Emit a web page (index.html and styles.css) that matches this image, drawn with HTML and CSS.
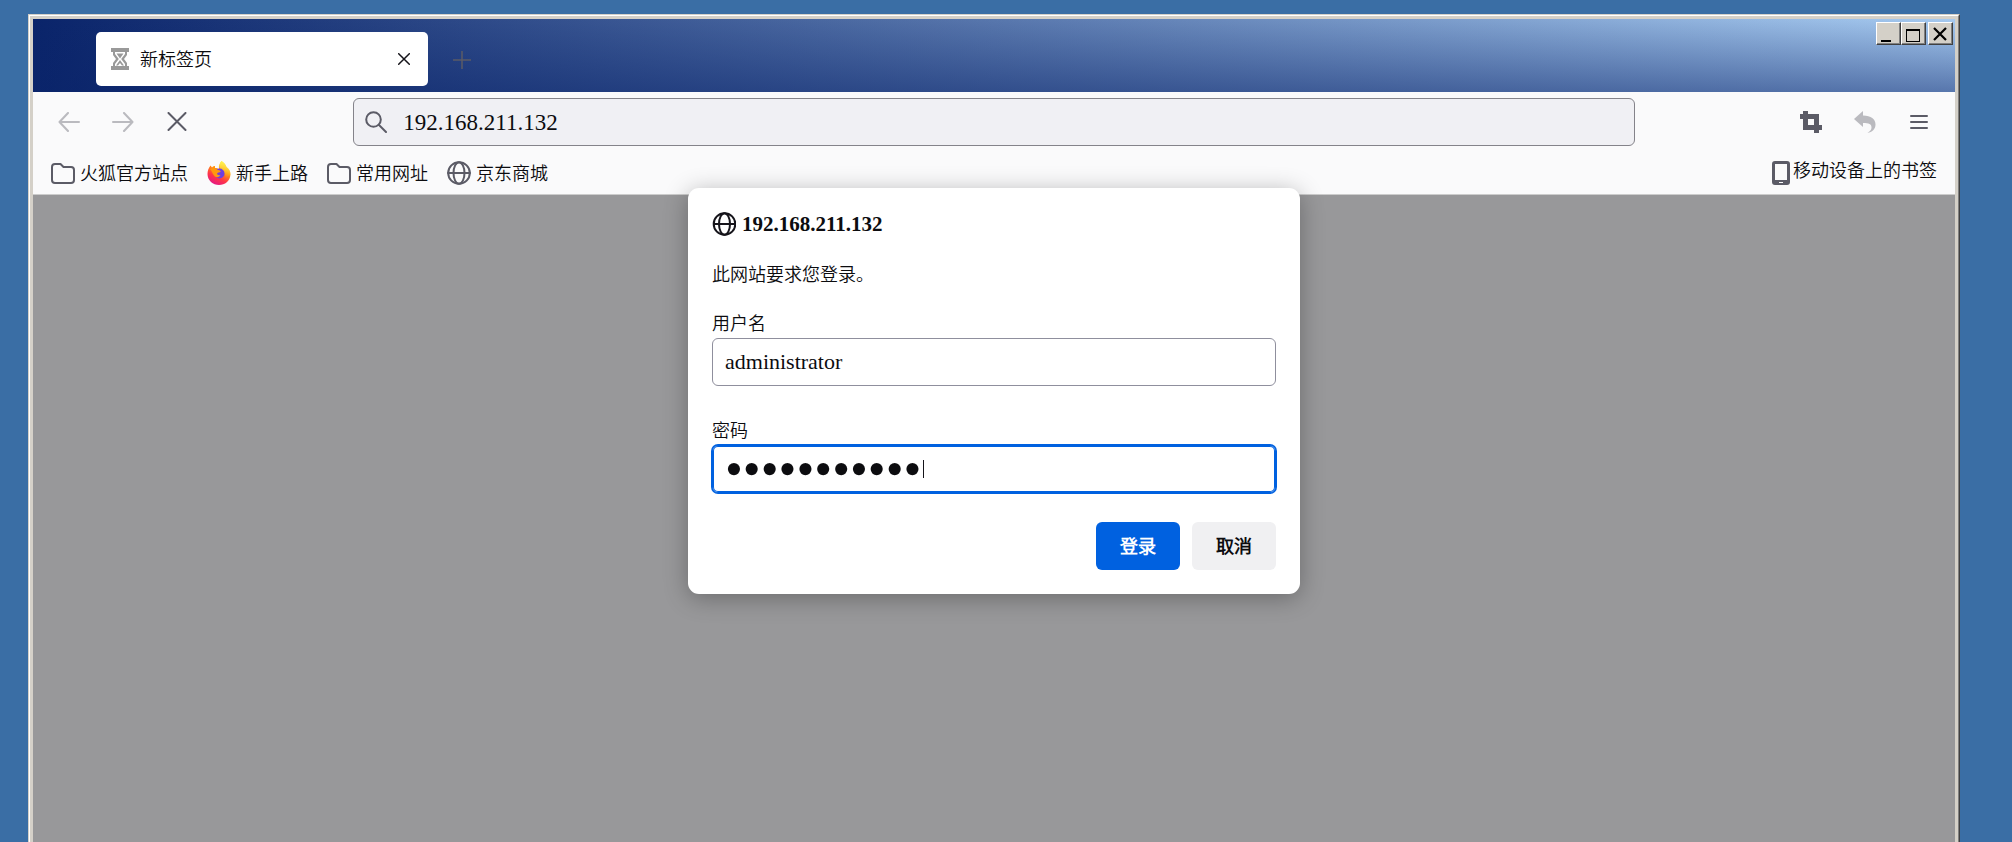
FILE: index.html
```html
<!DOCTYPE html>
<html lang="zh-CN">
<head>
<meta charset="utf-8">
<title>新标签页</title>
<link rel="stylesheet" href="styles.css">
</head>
<body>
<div class="window">
  <div class="frame">
    <header class="titlebar">
      <div class="tab">
        <svg class="tab-icon" width="18" height="22" viewBox="0 0 18 22">
          <path fill="#999" d="M0 0h18v4h-2v3l-3 4 3 4v3h2v4H0v-4h2v-3l3-4-3-4V4H0z"/>
          <path fill="#fff" d="M4 4h10v2l-3.800 5 3.800 5v2H4v-2l3.800-5L4 6z"/>
          <path fill="#999" d="M5.500 5.500h7L9 10.500zM9 12l4 5.500h-2L9 15l-2 2.500H5z"/>
        </svg>
        <span class="tab-title">新标签页</span>
        <button class="icon-button tab-close" aria-label="关闭标签页"><svg width="12" height="12" viewBox="0 0 12 12"><path d="M.7.7l10.600 10.600M11.300.7L.7 11.300"/></svg></button>
      </div>
      <button class="icon-button new-tab" aria-label="打开新标签页"><svg width="18" height="18" viewBox="0 0 18 18"><path d="M9 0v18M0 9h18"/></svg></button>
      <div class="window-controls">
        <button class="control" aria-label="最小化"><svg width="22" height="19" viewBox="0 0 22 19"><path d="M4 16h10v2H4z"/></svg></button>
        <button class="control" aria-label="最大化"><svg width="22" height="19" viewBox="0 0 22 19"><path fill-rule="evenodd" d="M4 5h14v13H4zM5 7v10h12V7z"/></svg></button>
        <button class="control close" aria-label="关闭"><svg width="22" height="19" viewBox="0 0 22 19"><path d="M5 4l12 12M17 4L5 16" stroke="#000" stroke-width="2.200" fill="none"/></svg></button>
      </div>
    </header>
    <nav class="toolbar">
      <div class="nav-buttons">
        <button class="icon-button dim" aria-label="后退"><svg width="22" height="20" viewBox="0 0 22 20"><path d="M10 1L1.500 10l8.500 9M2 10h19" /></svg></button>
        <button class="icon-button dim" aria-label="前进"><svg width="22" height="20" viewBox="0 0 22 20"><path d="M12 1l8.500 9-8.500 9M20 10H1"/></svg></button>
        <button class="icon-button" aria-label="停止"><svg width="22" height="20" viewBox="0 0 22 20"><path d="M2.500 1l17 17M19.500 1l-17 17"/></svg></button>
      </div>
      <div class="address">
        <svg class="line" width="22" height="22" viewBox="0 0 22 22"><circle cx="8.500" cy="8.500" r="7.300"/><path d="M14 14l7 7"/></svg>
        <input class="address-input" type="text" value="192.168.211.132" aria-label="地址">
      </div>
      <div class="tool-buttons">
        <button class="icon-button" aria-label="截图"><svg width="22" height="22" viewBox="0 0 22 22"><path class="solid" fill-rule="evenodd" d="M3 0h5v3h11v11h3v5h-3v3h-5v-3H3V8H0V3h3zM8 8v6h6V8z"/></svg></button>
        <button class="icon-button dim" aria-label="撤销"><svg width="22" height="22" viewBox="0 0 22 22"><path class="solid" d="M0 8L9 0v4.500c8 0 12.500 3.500 12.500 9 0 5-3.500 7.500-8 8.500 3-2 4-3.500 4-5.500 0-3.500-2.500-4.500-8.500-4.500V16z"/></svg></button>
        <button class="icon-button" aria-label="菜单"><svg width="22" height="16" viewBox="0 0 22 16"><path d="M3 2h16M3 8h16M3 14h16"/></svg></button>
      </div>
    </nav>
    <nav class="bookmarks">
      <a class="bookmark" href="#"><svg class="line" width="24" height="22" viewBox="0 0 24 22"><path d="M4 2h5.500l3 3H20a3 3 0 0 1 3 3v10a3 3 0 0 1-3 3H4a3 3 0 0 1-3-3V5a3 3 0 0 1 3-3z"/></svg><span>火狐官方站点</span></a>
      <a class="bookmark" href="#"><svg width="24" height="24" viewBox="0 0 24 24">
        <defs>
          <linearGradient id="flame" x1=".8" y1="0" x2=".3" y2="1"><stop offset=".05" stop-color="#fff44f"/><stop offset=".4" stop-color="#ff980e"/><stop offset=".7" stop-color="#ff3647"/><stop offset="1" stop-color="#e31587"/></linearGradient>
          <linearGradient id="tail" x1=".5" y1="0" x2=".5" y2="1"><stop offset="0" stop-color="#fff44f"/><stop offset="1" stop-color="#ffbd2f" stop-opacity="0"/></linearGradient>
        </defs>
        <path fill="url(#flame)" d="M14.500 0c3 2 4.500 4.300 5 6 3 2 4 5 4 7.500C23 20 18 24 12 24S.5 19.500.5 13c0-3 1-6 3-8.500L5 6.500C6 5 7 5 8 5v2c1.500 0 3 .5 4 1-.5-3 .5-6 2.500-8z"/>
        <path fill="url(#tail)" d="M14.500 0c3 2 4.500 4.300 5 6 3 2 4 5 4 7.500l-5 4C19 11 15 10 13 8c-1-3-.5-6 1.500-8z"/>
        <circle cx="12.500" cy="12.500" r="5" fill="#6e3fe0"/>
        <path fill="#ff980e" d="M3 8c3-2 6-1 8 1 2 0 3 1 2.500 2-1.500.5-3 .5-3.500 1.500 0 1.500 2 2 3.500 1.500-1 2.500-5 3-6.500.5C5 12 5 10 3 8z"/>
      </svg><span>新手上路</span></a>
      <a class="bookmark" href="#"><svg class="line" width="24" height="22" viewBox="0 0 24 22"><path d="M4 2h5.500l3 3H20a3 3 0 0 1 3 3v10a3 3 0 0 1-3 3H4a3 3 0 0 1-3-3V5a3 3 0 0 1 3-3z"/></svg><span>常用网址</span></a>
      <a class="bookmark" href="#"><svg class="line" width="24" height="24" viewBox="0 0 24 24"><circle cx="12" cy="12" r="10.800"/><ellipse cx="12" cy="12" rx="5.500" ry="10.800"/><path d="M1 12h22"/></svg><span>京东商城</span></a>
      <a class="bookmark mobile" href="#"><svg width="18" height="24" viewBox="0 0 18 24"><path fill="#5b5b66" fill-rule="evenodd" d="M3 0h12a3 3 0 0 1 3 3v18a3 3 0 0 1-3 3H3a3 3 0 0 1-3-3V3a3 3 0 0 1 3-3zM3 3v16h12V3zM7 21v1h4v-1z"/></svg><span>移动设备上的书签</span></a>
    </nav>
    <main class="page">
      <form class="dialog" role="dialog" aria-labelledby="host">
        <h1 class="host" id="host"><svg class="line" width="24" height="24" viewBox="0 0 24 24"><circle cx="12.500" cy="12" r="10.800"/><ellipse cx="12.500" cy="12" rx="5.500" ry="10.800"/><path d="M2 12h21"/></svg>192.168.211.132</h1>
        <p class="message">此网站要求您登录。</p>
        <label class="label" for="user">用户名</label>
        <input class="field" id="user" type="text" value="administrator">
        <label class="label" for="pass">密码</label>
        <div class="secret">
          <input class="field focused" id="pass" type="password" value="abcdefghijk">
          <span class="caret"></span>
        </div>
        <div class="actions">
          <button class="button primary" type="button">登录</button>
          <button class="button" type="button">取消</button>
        </div>
      </form>
    </main>
  </div>
</div>
</body>
</html>
```
FILE: styles.css
```css
* {
  box-sizing: border-box;
}

body {
  margin: 0;
  height: 100vh;
  overflow: hidden;
  display: flex;
  padding: 14px 52px 0 28px;
  background: #3a6ea5;
  color: #0c0c0f;
  font: 350 18px/24px "Noto Sans CJK SC DemiLight", "Noto Sans CJK SC", sans-serif;
}

svg {
  display: block;
  flex: none;
}

button,
input {
  font: inherit;
  color: inherit;
}

.window {
  flex: 1;
  display: flex;
  border: 1px solid;
  border-color: #d4d0c8 #404040 #404040 #d4d0c8;
  border-bottom: 0;
}

.frame {
  flex: 1;
  min-width: 0;
  display: flex;
  flex-direction: column;
  border: 1px solid;
  border-color: #fff #808080 #808080 #fff;
  border-bottom: 0;
  padding: 3px 3px 0;
  background: #d4d0c8;
}

.titlebar {
  display: flex;
  align-items: flex-start;
  height: 73px;
  padding: 13px 2px 0 63px;
  background:
    linear-gradient(to bottom, rgba(10, 36, 106, 0), rgba(10, 36, 106, 0.5)),
    linear-gradient(to right, #0a246a, #a6caf0);
}

.tab {
  display: flex;
  align-items: center;
  gap: 11px;
  width: 332px;
  height: 54px;
  padding: 0 18px 0 15px;
  border-radius: 5px;
  background: #fff;
}

.tab-title {
  flex: 1;
  padding-bottom: 2px;
}

.icon-button {
  display: flex;
  align-items: center;
  justify-content: center;
  padding: 0;
  border: 0;
  background: none;
}

.icon-button path,
.line {
  fill: none;
  stroke: #5b5b66;
  stroke-width: 2;
  stroke-linecap: round;
  stroke-linejoin: round;
}

.icon-button .solid {
  fill: #5b5b66;
  stroke: none;
}

.tab-close path {
  stroke: #15141a;
  stroke-width: 1.5;
}

.new-tab path {
  stroke-width: 1.5;
}

.dim {
  opacity: 0.4;
}

.new-tab {
  height: 56px;
  margin-left: 25px;
}

.window-controls {
  display: flex;
  margin: -10px 0 0 auto;
}

.control {
  width: 25px;
  height: 23px;
  padding: 0;
  border: 1px solid;
  border-color: #fff #404040 #404040 #fff;
  box-shadow: inset -1px -1px #808080;
  background: #d4d0c8;
}

.control.close {
  margin-left: 2px;
}

.toolbar {
  display: grid;
  grid-template-columns: 1fr 4fr 1fr;
  align-items: center;
  height: 60px;
  background: #fafafb;
}

.nav-buttons,
.tool-buttons {
  display: flex;
  gap: 32px;
}

.nav-buttons {
  padding-left: 25px;
}

.tool-buttons {
  justify-content: flex-end;
  padding-right: 25px;
}

.address {
  display: flex;
  align-items: center;
  gap: 16px;
  height: 48px;
  padding: 0 11px;
  border: 1px solid #84838a;
  border-radius: 6px;
  background: #f0f0f4;
}

.address-input {
  flex: 1;
  min-width: 0;
  padding: 2px 0 0;
  border: 0;
  outline: 0;
  background: none;
  font: 23px/28px "Liberation Serif", serif;
}

.bookmarks {
  display: flex;
  align-items: center;
  gap: 19px;
  height: 43px;
  padding: 0 18px 1px;
  border-bottom: 1px solid #ccc;
  background: #fafafb;
}

.bookmark {
  display: flex;
  align-items: center;
  gap: 5px;
  color: inherit;
  text-decoration: none;
}

.bookmark span {
  padding-bottom: 2px;
}

.mobile {
  gap: 3px;
  margin-left: auto;
}

.bookmark.mobile span {
  padding-bottom: 8px;
}

.page {
  flex: 1;
  display: flex;
  align-items: flex-start;
  justify-content: center;
  background: #98989a;
}

.dialog {
  display: flex;
  flex-direction: column;
  width: 612px;
  margin-top: -7px;
  padding: 24px;
  border-radius: 11px;
  background: #fff;
  box-shadow: 0 4px 24px rgba(0, 0, 0, 0.3);
}

.host {
  display: flex;
  align-items: center;
  gap: 6px;
  margin: 0;
  font: bold 21px/24px "Liberation Serif", serif;
}

.host .line {
  stroke: #15141a;
}

.message {
  margin: 25px 0;
}

.label {
  margin-bottom: 4px;
}

.field {
  width: 100%;
  height: 48px;
  padding: 0 12px;
  border: 1px solid #8f8f9d;
  border-radius: 6px;
  outline: 0;
  background: #fff;
  font: 22px/28px "Liberation Serif", serif;
}

.secret {
  position: relative;
}

#user {
  margin-bottom: 31px;
}

.focused {
  border-color: #0061e0;
  box-shadow: inset 0 0 0 1px #0061e0, 0 0 0 1px #0061e0;
  font-size: 51px;
}

.caret {
  position: absolute;
  left: 211px;
  top: 15px;
  width: 1px;
  height: 18px;
  background: #15141a;
}

.actions {
  display: flex;
  justify-content: flex-end;
  gap: 12px;
  margin-top: 29px;
}

.button {
  width: 84px;
  height: 48px;
  padding: 0 0 2px;
  border: 0;
  border-radius: 6px;
  background: #f0f0f2;
  font-weight: 700;
}

.primary {
  background: #0061e0;
  color: #fff;
}
```
